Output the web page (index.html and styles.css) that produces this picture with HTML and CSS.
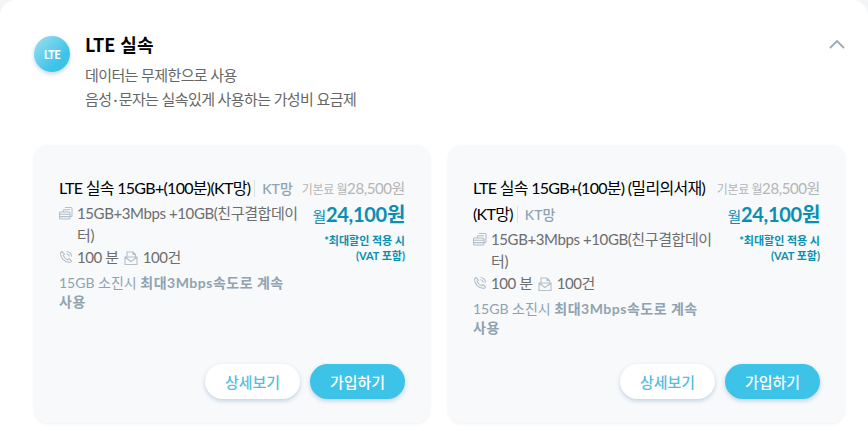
FILE: index.html
```html
<!DOCTYPE html>
<html lang="ko">
  <head>
    <meta charset="UTF-8" />
    <meta name="viewport" content="width=device-width, initial-scale=1.0" />
    <title>LTE 실속</title>
    <link rel="stylesheet" href="styles.css">
  </head>
  <body>
    <section class="panel">
      <div class="panel-header">
        <div class="lte-badge">LTE</div>
        <div class="panel-title">
          <h2>LTE 실속</h2>
          <p>데이터는 무제한으로 사용</p>
          <p>음성<span class="dot">·</span>문자는 실속있게 사용하는 가성비 요금제</p>
        </div>
        <svg class="chevron" width="16" height="10" viewBox="0 0 16 10">
          <path d="M1 9 L8 2 L15 9" fill="none" stroke="#9aabb8" stroke-width="1.8" />
        </svg>
      </div>

      <div class="plans">
        <div class="plan">
          <div class="plan-top">
            <div class="plan-info">
              <div class="plan-name">LTE 실속 15GB+(100분)(KT망)<span class="net">KT망</span></div>
              <div class="spec">
                <svg class="spec-icon" viewBox="0 0 14 14">
                  <path d="M6 1.500h6c.6 0 1 .4 1 1v7c0 .6-.4 1-1 1h-1M4.500 3.800h6.500M1.500 6h8c.8 0 1.500.5 1.500 1v5c0 .6-.7 1-1.500 1h-8c-.5 0-1-.4-1-1V7c0-.5.5-1 1-1zM.5 8.300h10.500M.5 10.600h10.500M4.500 6V3.800" fill="none" stroke="#b4bfc8" stroke-width="1.100" />
                </svg>
                <span>15GB+3Mbps +10GB(친구결합데이터)</span>
              </div>
              <div class="spec">
                <svg class="spec-icon" viewBox="0 0 14 14">
                  <path d="M3 1.500 1.500 3c0 5 4 9.500 9.500 9.500L12.500 11 10 8.500 8.500 9.800C6.800 9 5 7.200 4.200 5.500L5.500 4zM7.500 1.500a5 5 0 0 1 5 5M7.500 3.800a2.700 2.700 0 0 1 2.700 2.700" fill="none" stroke="#b4bfc8" stroke-width="1.100" />
                </svg>
                <span>100 분</span>
                <svg class="spec-icon sms" viewBox="0 0 14 14">
                  <path d="M1 6h12v7.500H1zM1 6l6 4.500L13 6M3 6V1h6l2.500 2.500V6M9 1v2.500h2.500" fill="none" stroke="#b4bfc8" stroke-width="1.100" />
                </svg>
                <span>100건</span>
              </div>
              <div class="plan-note">15GB 소진시 <b>최대3Mbps속도로 계속 사용</b></div>
            </div>
            <div class="plan-price">
              <div class="base-price">기본료 월<span>28,500원</span></div>
              <div class="sale-price"><span>월</span>24,100원</div>
              <div class="price-note">*최대할인 적용 시<br>(VAT 포함)</div>
            </div>
          </div>
          <div class="plan-buttons">
            <button class="btn-detail">상세보기</button>
            <button class="btn-join">가입하기</button>
          </div>
        </div>

        <div class="plan">
          <div class="plan-top">
            <div class="plan-info">
              <div class="plan-name">LTE 실속 15GB+(100분) (밀리의서재) (KT망)<span class="net">KT망</span></div>
              <div class="spec">
                <svg class="spec-icon" viewBox="0 0 14 14">
                  <path d="M6 1.500h6c.6 0 1 .4 1 1v7c0 .6-.4 1-1 1h-1M4.500 3.800h6.500M1.500 6h8c.8 0 1.500.5 1.500 1v5c0 .6-.7 1-1.500 1h-8c-.5 0-1-.4-1-1V7c0-.5.5-1 1-1zM.5 8.300h10.500M.5 10.600h10.500M4.500 6V3.800" fill="none" stroke="#b4bfc8" stroke-width="1.100" />
                </svg>
                <span>15GB+3Mbps +10GB(친구결합데이터)</span>
              </div>
              <div class="spec">
                <svg class="spec-icon" viewBox="0 0 14 14">
                  <path d="M3 1.500 1.500 3c0 5 4 9.500 9.500 9.500L12.500 11 10 8.500 8.500 9.800C6.800 9 5 7.200 4.200 5.500L5.500 4zM7.500 1.500a5 5 0 0 1 5 5M7.500 3.800a2.700 2.700 0 0 1 2.700 2.700" fill="none" stroke="#b4bfc8" stroke-width="1.100" />
                </svg>
                <span>100 분</span>
                <svg class="spec-icon sms" viewBox="0 0 14 14">
                  <path d="M1 6h12v7.500H1zM1 6l6 4.500L13 6M3 6V1h6l2.500 2.500V6M9 1v2.500h2.500" fill="none" stroke="#b4bfc8" stroke-width="1.100" />
                </svg>
                <span>100건</span>
              </div>
              <div class="plan-note">15GB 소진시 <b>최대3Mbps속도로 계속 사용</b></div>
            </div>
            <div class="plan-price">
              <div class="base-price">기본료 월<span>28,500원</span></div>
              <div class="sale-price"><span>월</span>24,100원</div>
              <div class="price-note">*최대할인 적용 시<br>(VAT 포함)</div>
            </div>
          </div>
          <div class="plan-buttons">
            <button class="btn-detail">상세보기</button>
            <button class="btn-join">가입하기</button>
          </div>
        </div>
      </div>
    </section>
  </body>
</html>
```

FILE: styles.css
```css
/* General styling */
body {
  font-family: Lato, "Noto Sans CJK KR", sans-serif;
  margin: 0;
  background-color: #f4f5f7;
  overflow: hidden;
}

.panel {
  background-color: #fff;
  border-radius: 16px 16px 0 0;
  padding: 32px 23px 8px 34px;
  height: 431px;
  box-sizing: border-box;
}

/* Header */
.panel-header {
  display: flex;
  align-items: flex-start;
  margin-bottom: 34px;
}

.lte-badge {
  flex: none;
  width: 36px;
  height: 36px;
  margin: 4px 15px 0 0;
  border-radius: 50%;
  background: linear-gradient(135deg, #a0e0ef, #3bc3e8 70%);
  box-shadow: 0 2px 4px rgba(70, 120, 150, 0.3);
  color: #fff;
  font-family: "Noto Sans CJK KR", sans-serif;
  font-size: 11px;
  font-weight: 700;
  line-height: 36px;
  letter-spacing: -0.6px;
  text-align: center;
}

.panel-title {
  flex: 1;
}

.panel-title h2 {
  margin: 0 0 7px;
  font-family: "Noto Sans CJK KR", sans-serif;
  font-size: 18px;
  font-weight: 700;
  line-height: 24px;
  color: #000;
}

.panel-title p {
  margin: 0;
  font-size: 15px;
  line-height: 24px;
  letter-spacing: -0.6px;
  color: #666;
}

.dot {
  margin: 0 2px;
}

.chevron {
  margin: 7px 0 0;
}

/* Plan cards */
.plans {
  display: grid;
  grid-template-columns: 396px 397px;
  gap: 18px;
}

.plan {
  display: flex;
  flex-direction: column;
  justify-content: space-between;
  height: 278px;
  box-sizing: border-box;
  padding: 30px 25px 24px;
  background-color: #f7f9fb;
  border-radius: 14px;
  box-shadow: 0 1px 3px rgba(120, 140, 160, 0.12);
}

.plan-top {
  display: flex;
  justify-content: space-between;
}

.plan-info {
  width: 244px;
}

.plan-name {
  font-size: 16px;
  line-height: 26px;
  letter-spacing: -0.7px;
  word-break: keep-all;
  color: #000;
}

.net {
  margin-left: 4px;
  padding-left: 7px;
  border-left: 1px solid #dde2e6;
  font-size: 14px;
  font-weight: 500;
  letter-spacing: 0;
  color: #8fa3b1;
}

.spec {
  position: relative;
  padding-left: 18px;
  font-size: 15px;
  line-height: 22px;
  letter-spacing: -0.4px;
  color: #6d6d6d;
}

.spec-icon {
  position: absolute;
  left: 0;
  top: 4px;
  width: 14px;
  height: 14px;
}

.spec-icon.sms {
  position: static;
  margin: 0 1px 0 2px;
  vertical-align: -2px;
}

.plan-note {
  margin-top: 5px;
  font-size: 14px;
  line-height: 19px;
  word-break: keep-all;
  color: #8fa3b1;
}

.plan-note b {
  letter-spacing: 0.5px;
}

.plan-price {
  text-align: right;
  white-space: nowrap;
}

.base-price {
  font-size: 12px;
  line-height: 26px;
  letter-spacing: -0.4px;
  color: #b5b5b5;
}

.base-price span {
  font-size: 15px;
}

.sale-price {
  font-size: 20px;
  font-weight: 700;
  line-height: 22px;
  letter-spacing: -0.3px;
  color: #0b8fb0;
}

.sale-price span {
  font-size: 15px;
  font-weight: 400;
}

.price-note {
  margin-top: 6px;
  font-size: 11px;
  font-weight: 700;
  line-height: 15px;
  color: #0b8fb0;
}

/* Buttons */
.plan-buttons {
  display: flex;
  justify-content: flex-end;
  gap: 10px;
}

button {
  width: 95px;
  height: 35px;
  border: none;
  border-radius: 18px;
  font-family: inherit;
  font-size: 15px;
  font-weight: 500;
  cursor: pointer;
  box-shadow: 0 2px 4px rgba(80, 120, 160, 0.3);
}

.btn-detail {
  background-color: #fff;
  color: #56bedd;
}

.btn-join {
  background-color: #3dc3e8;
  color: #fff;
}
```
